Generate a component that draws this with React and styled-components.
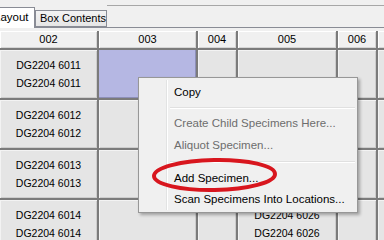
import React from "react";
import styled, { createGlobalStyle } from "styled-components";

const Global = createGlobalStyle`
  html, body { margin: 0; padding: 0; background: #f0f0f0; }
  body { font-family: "Liberation Sans", Arial, sans-serif; }
`;

const Page = styled.div`
  position: relative;
  width: 384px;
  height: 240px;
  overflow: hidden;
  background: #f0f0f0;
`;

const TabBar = styled.div`
  display: flex;
  align-items: flex-end;
  height: 27px;
  border-bottom: 1px solid #898c95;
`;

const Tab = styled.div`
  box-sizing: border-box;
  height: ${(p) => (p.$active ? 21 : 17)}px;
  margin-bottom: ${(p) => (p.$active ? -1 : 0)}px;
  margin-left: ${(p) => (p.$offset ? p.$offset : 0)}px;
  width: ${(p) => p.$w}px;
  padding-left: ${(p) => p.$pad}px;
  border: 1px solid #898c95;
  border-bottom: ${(p) => (p.$active ? "none" : "1px solid #898c95")};
  background: ${(p) =>
    p.$active ? "#ffffff" : "linear-gradient(#f3f3f3, #e6e6e6)"};
  font-size: ${(p) => (p.$active ? 11.5 : 11)}px;
  line-height: ${(p) => (p.$active ? 19 : 15)}px;
  color: #000;
  white-space: nowrap;
  flex-shrink: 0;
`;

const Filler = styled.div`
  flex: 1;
  align-self: stretch;
  margin-top: 5px;
  border-top: 1px solid #a7a7a7;
`;

const Panel = styled.div`
  padding-top: 3px;
`;

const Grid = styled.div`
  display: grid;
  grid-template-columns: 97px 97px 38px 98px 38px 60px;
  grid-template-rows: 17px 48px 48px 48px 48px;
  gap: 2px;
  background: #7b7b7b;
  width: 440px;
`;

const HeadCell = styled.div`
  background: #f0f0f0;
  box-shadow: inset 1px 1px 0 #ffffff, inset -1px -1px 0 #d5d5d5;
  font-size: 11px;
  line-height: 17px;
  text-align: center;
  color: #000;
`;

const Cell = styled.div`
  display: flex;
  flex-direction: column;
  align-items: center;
  justify-content: center;
  background: ${(p) => (p.$selected ? "#b5b7e3" : "#e5e5e5")};
  box-shadow: ${(p) =>
    p.$selected
      ? "inset -1px -1px 0 #8d8fb8"
      : "inset 1px 1px 0 #f3f3f3, inset -1px -1px 0 #cdcdcd"};
  font-size: 10.5px;
  line-height: 18.5px;
  color: #000;
`;

const Menu = styled.div`
  position: absolute;
  left: 138px;
  top: 77px;
  width: 220px;
  box-sizing: border-box;
  padding: 3px 2px 2px 2px;
  background: #f0f0f0;
  border: 1px solid #979797;
  box-shadow: 2px 2px 3px rgba(0, 0, 0, 0.3);
  &::before {
    content: "";
    position: absolute;
    left: 27px;
    top: 2px;
    bottom: 2px;
    width: 1px;
    background: #e2e3e3;
    box-shadow: 1px 0 0 #ffffff;
  }
`;

const Item = styled.div`
  height: ${(p) => p.$h || 22}px;
  line-height: ${(p) => p.$h || 22}px;
  padding-left: 33px;
  font-size: 11.5px;
  color: ${(p) => (p.$disabled ? "#6d6d6d" : "#000")};
  white-space: nowrap;
`;

const Sep = styled.div`
  height: ${(p) => p.$h}px;
  display: flex;
  align-items: center;
  padding-left: 29px;
  &::after {
    content: "";
    flex: 1;
    height: 1px;
    background: #e0e0e0;
    box-shadow: 0 1px 0 #ffffff;
  }
`;

const Annotation = styled.svg`
  position: absolute;
  left: 0;
  top: 0;
  pointer-events: none;
`;

const cols = ["002", "003", "004", "005", "006", ""];

const rows = [
  ["DG2204 6011", null, null, null, null, null],
  ["DG2204 6012", null, null, null, null, null],
  ["DG2204 6013", null, null, null, null, null],
  ["DG2204 6014", null, null, "DG2204 6026", null, null],
];

export default function App() {
  return (
    <Page>
      <Global />
      <TabBar>
        <Tab $active $w={46} $pad={4} $offset={-11}>
          Layout
        </Tab>
        <Tab $w={72} $pad={4}>
          Box Contents
        </Tab>
        <Filler />
      </TabBar>
      <Panel>
        <Grid>
          {cols.map((c, i) => (
            <HeadCell key={"h" + i}>{c}</HeadCell>
          ))}
          {rows.map((r, ri) =>
            r.map((v, ci) => (
              <Cell key={ri + "-" + ci} $selected={ri === 0 && ci === 1}>
                {v && (
                  <>
                    <span>{v}</span>
                    <span>{v}</span>
                  </>
                )}
              </Cell>
            ))
          )}
        </Grid>
      </Panel>
      <Menu>
        <Item>Copy</Item>
        <Sep $h={9} />
        <Item $disabled>Create Child Specimens Here...</Item>
        <Item $disabled>Aliquot Specimen...</Item>
        <Sep $h={11} />
        <Item>Add Specimen...</Item>
        <Item $h={21}>Scan Specimens Into Locations...</Item>
      </Menu>
      <Annotation width="384" height="240" viewBox="0 0 384 240">
        <ellipse
          cx="214.5"
          cy="175"
          rx="60.5"
          ry="15"
          fill="none"
          stroke="#d8161e"
          strokeWidth="4"
          transform="rotate(-1 214.5 175)"
        />
      </Annotation>
    </Page>
  );
}
